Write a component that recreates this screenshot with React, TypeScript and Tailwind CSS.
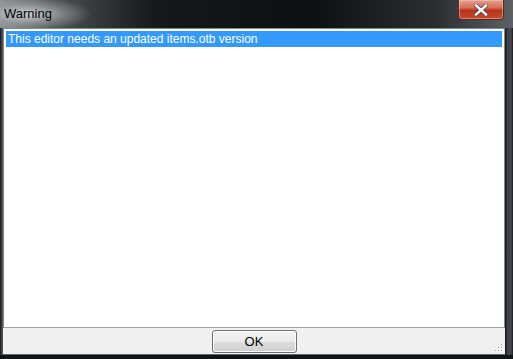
export default function App() {
  return (
    <div className="w-[513px] h-[359px] flex flex-col bg-[#1c2024] overflow-hidden" style={{ fontFamily: '"Liberation Sans", Arial, sans-serif' }}>
      {/* title bar */}
      <div className="relative h-[28px] shrink-0 bg-[linear-gradient(90deg,#8d9196_0%,#4e5357_10%,#15191d_30%,#0c1014_60%,#2a2e32_85%,#5d6164_100%)]">
        <div className="absolute left-0 top-0 w-[130px] h-[28px] bg-[radial-gradient(ellipse_64px_17px_at_28px_14px,rgba(205,207,210,0.95),rgba(160,163,167,0.5)_60%,rgba(0,0,0,0)_100%)]" />
        <div className="absolute left-[4px] top-[6px] text-[13px] leading-[15px] text-black">Warning</div>
        <div className="absolute left-[458px] top-0 w-[46px] h-[20px] rounded-b-[4px] border border-t-0 border-[#5a2a20] bg-[linear-gradient(180deg,#e8a08e_0%,#d4705a_40%,#b8321a_55%,#c64a2e_100%)] flex items-center justify-center shadow-[inset_0_0_0_1px_rgba(255,220,210,0.4)]">
          <svg width="14" height="12" viewBox="0 0 14 12">
            <path d="M2 1.5 L12 10.5 M12 1.5 L2 10.5" stroke="#4a4a4a" strokeWidth="4" strokeLinecap="square" />
            <path d="M2 1.5 L12 10.5 M12 1.5 L2 10.5" stroke="#ffffff" strokeWidth="2.4" strokeLinecap="square" />
          </svg>
        </div>
      </div>
      {/* body */}
      <div className="flex flex-1">
        <div className="w-[3px] bg-[linear-gradient(90deg,#15181b,#5c6064)]" />
        <div className="flex-1 flex flex-col bg-[#f0f0f0]">
          <div className="flex-1 border border-[#828790] border-b-[#a0a0a0] bg-white p-[2px]">
            <div className="h-[16px] bg-[#3399ff] text-white text-[12px] leading-[16px] pl-[2px] whitespace-nowrap">
              This editor needs an updated items.otb version
            </div>
          </div>
          <div className="relative h-[27px] shrink-0 flex justify-center items-start pt-[2px] border-b border-[#646464]">
            <button className="w-[85px] h-[23px] rounded-[3px] border border-[#707070] bg-[linear-gradient(180deg,#f2f2f2_0%,#ebebeb_50%,#dddddd_51%,#cfcfcf_100%)] text-[13px] leading-[20px] text-black shadow-[inset_0_0_0_1px_#fcfcfc]">
              OK
            </button>
            <svg className="absolute right-[2px] bottom-[2px]" width="10" height="10" viewBox="0 0 10 10">
              {[[8, 2], [8, 5], [5, 5], [8, 8], [5, 8], [2, 8]].map(([x, y], i) => (
                <g key={i}>
                  <rect x={x} y={y} width="1" height="1" fill="#a0a0a0" />
                  <rect x={x + 1} y={y + 1} width="1" height="1" fill="#ffffff" />
                </g>
              ))}
            </svg>
          </div>
        </div>
        <div className="w-[8px] bg-[linear-gradient(90deg,#1a1d20_0px,#1a1d20_1px,#3c4044_2px,#45494d_6px,#15181b_8px)]" />
      </div>
      <div className="h-[4px] shrink-0 bg-[#111417]" />
    </div>
  );
}
